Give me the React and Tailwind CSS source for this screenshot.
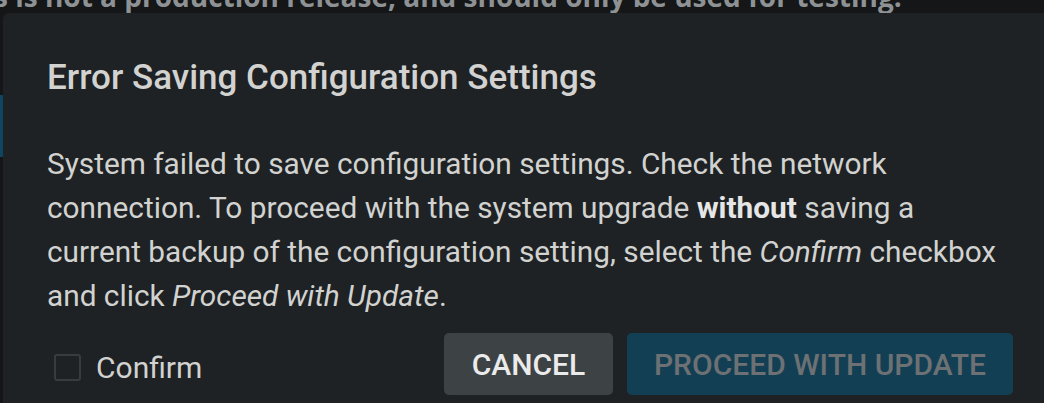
export default function App() {
  return (
    <div className="w-[1044px] h-[403px] overflow-hidden bg-[#141617] flex flex-col" style={{ fontFamily: "Roboto, 'Liberation Sans', sans-serif" }}>
      {/* page text behind the dialog, mostly cut off */}
      <div className="h-[13px] overflow-hidden relative shrink-0">
        <div className="absolute left-[-6px] top-[-25px] whitespace-nowrap text-[28px] font-bold text-[#8f9294]" style={{ fontFamily: "'Open Sans', sans-serif" }}>
          s is not a production release, and should only be used for testing.
        </div>
      </div>
      <div className="flex flex-1">
        <div className="w-[3px] flex flex-col">
          <div className="h-[82px]" />
          <div className="h-[62px] bg-[#0e4560]" />
        </div>
        <div className="flex-1 bg-[#1e2224] rounded-tl-[6px] pl-[44px] pr-[31px] text-[#d2d2d0]">
          <h2 className="mt-[45px] text-[35px] leading-[40px] font-medium">Error Saving Configuration Settings</h2>
          <p className="mt-[44px] text-[29.8px] leading-[44px]">
            System failed to save configuration settings. Check the network<br />
            connection. To proceed with the system upgrade <b className="font-bold text-[#e6e6e6]">without</b> saving a<br />
            current backup of the configuration setting, select the <i>Confirm</i> checkbox<br />
            and click <i>Proceed with Update</i>.
          </p>
          <div className="mt-[15px] flex items-center">
            <label className="flex items-center ml-[7px] mt-[7px]">
              <span className="w-[27px] h-[27px] border-2 border-[#383c3e] rounded-[3px]" />
              <span className="ml-[15px] text-[30px]">Confirm</span>
            </label>
            <div className="ml-auto flex gap-[14px]">
              <button className="h-[62px] w-[169px] rounded-[5px] bg-[#3d4245] text-[#ebebeb] text-[30px] font-medium">CANCEL</button>
              <button className="h-[62px] w-[386px] rounded-[5px] bg-[#133f54] text-[#6d7173] text-[30px] font-medium">PROCEED WITH UPDATE</button>
            </div>
          </div>
        </div>
      </div>
    </div>
  );
}
